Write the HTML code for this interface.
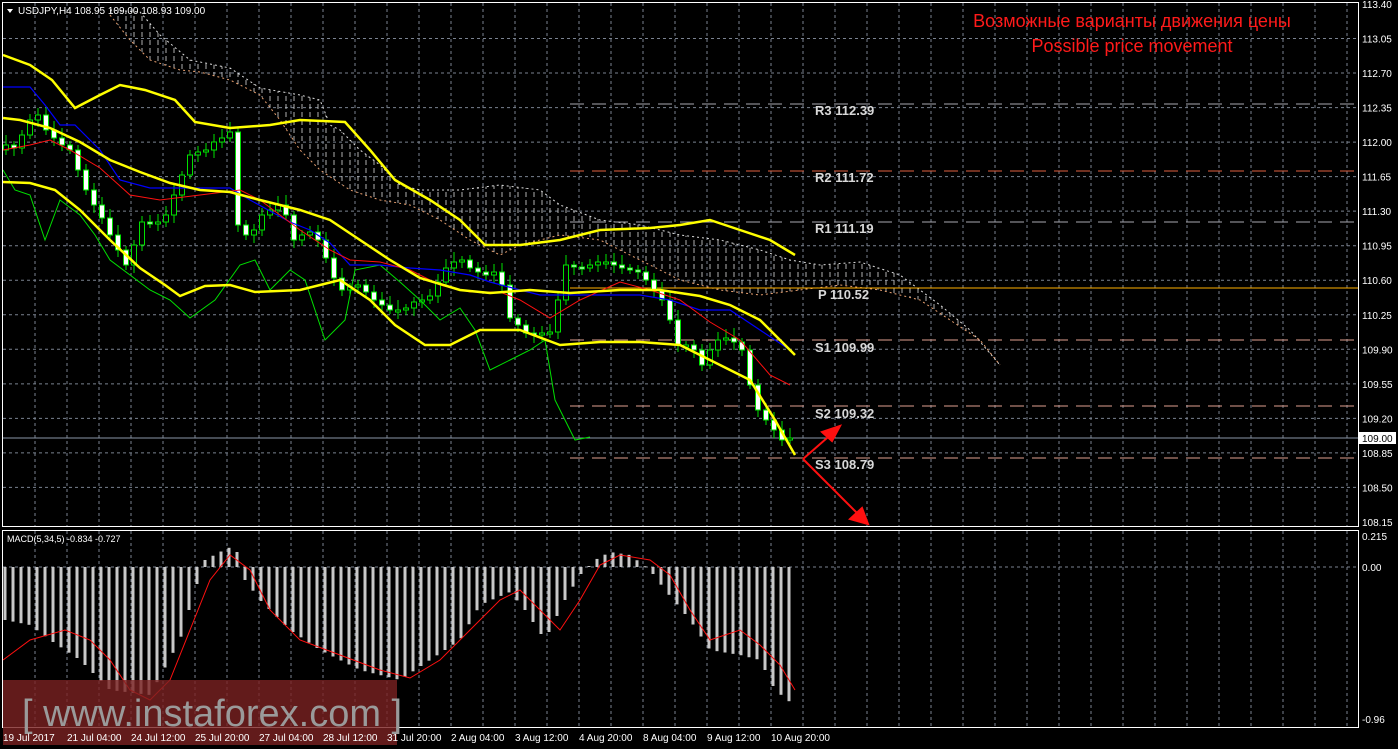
<!DOCTYPE html>
<html><head><meta charset="utf-8"><style>
html,body{margin:0;padding:0;background:#000;width:1398px;height:749px;overflow:hidden}
svg{display:block}
text{font-family:"Liberation Sans",sans-serif}
.ax{fill:#fff;font-size:10px}
.pv{fill:#d8d8d8;font-family:"Liberation Mono",monospace;font-size:13px;font-weight:bold}
</style></head><body>
<svg id="s" width="1398" height="749" xmlns="http://www.w3.org/2000/svg">
<defs>
<pattern id="hatch" x="2" width="8" height="8" patternUnits="userSpaceOnUse">
<line x1="4" y1="0" x2="4" y2="5" stroke="#cfcfcf" stroke-width="1"/>
</pattern>
</defs>
<g id="grid" stroke="#7a8290" stroke-width="1" stroke-dasharray="3,3"></g>
<!-- cloud -->
<polygon fill="url(#hatch)" opacity="0.85" points="110,10 140,12 160,35 190,60 230,68 260,88 300,95 320,100 330,125 340,130 360,150 380,165 400,185 420,190 460,190 500,185 540,190 560,205 600,220 640,225 680,235 720,240 760,250 790,260 820,265 860,262 900,275 940,305 970,330 1000,365 980,340 950,320 920,300 880,290 840,285 800,290 760,295 720,290 680,280 640,260 600,240 560,235 520,245 500,255 470,240 440,220 410,205 380,200 350,190 320,170 300,150 280,120 260,95 230,80 200,72 180,70 150,60 130,40 110,15"/>
<polyline fill="none" stroke="#ddd" stroke-dasharray="2,3" points="110,10 140,12 160,35 190,60 230,68 260,88 300,95 320,100 330,125 340,130 360,150 380,165 400,185 420,190 460,190 500,185 540,190 560,205 600,220 640,225 680,235 720,240 760,250 790,260 820,265 860,262 900,275 940,305 970,330 1000,365"/>
<polyline fill="none" stroke="#e8a070" stroke-dasharray="2,3" points="110,15 130,40 150,60 180,70 200,72 230,80 260,95 280,120 300,150 320,170 350,190 380,200 410,205 440,220 470,240 500,255 520,245 560,235 600,240 640,260 680,280 720,290 760,295 800,290 840,285 880,290 920,300 950,320 980,340 1000,365"/>
<!-- pivots -->
<g stroke-width="1">
<line x1="570" y1="104" x2="1358" y2="104" stroke="#a8a8b0" stroke-dasharray="14,8"/>
<line x1="570" y1="171" x2="1358" y2="171" stroke="#e06040" stroke-dasharray="14,8"/>
<line x1="570" y1="222" x2="1358" y2="222" stroke="#a8a8b0" stroke-dasharray="14,8"/>
<line x1="570" y1="288" x2="1358" y2="288" stroke="#ffb000"/>
<line x1="570" y1="340" x2="1358" y2="340" stroke="#e0a090" stroke-dasharray="14,8"/>
<line x1="570" y1="406" x2="1358" y2="406" stroke="#e0a090" stroke-dasharray="14,8"/>
<line x1="570" y1="458" x2="1358" y2="458" stroke="#e0a090" stroke-dasharray="14,8"/>
<line x1="3" y1="438" x2="1358" y2="438" stroke="#8a96a8"/>
</g>
<g id="candles"></g>
<polyline fill="none" stroke="#00e000" stroke-width="1" points="3,170 15,190 30,195 45,240 60,200 80,215 95,235 110,260 130,275 150,290 170,300 190,318 215,300 240,265 255,260 270,290 290,270 305,280 325,340 345,320 355,270 380,265 400,282 420,300 440,320 460,308 475,330 490,370 510,360 530,350 545,340 555,400 575,440 590,437"/>
<polyline fill="none" stroke="#0000ff" stroke-width="1.2" points="3,87 30,87 45,105 60,125 75,125 100,150 120,180 150,188 230,188 250,200 290,222 310,230 330,243 350,265 380,265 410,268 440,270 470,275 490,282 520,290 540,295 570,295 640,295 670,300 700,310 730,310 760,330 790,350"/>
<polyline fill="none" stroke="#ff1010" stroke-width="1" points="3,150 30,145 50,140 70,150 100,168 130,195 160,200 200,195 240,190 260,200 280,215 300,230 330,250 350,260 380,262 410,270 440,285 470,292 500,292 520,300 550,318 580,300 620,282 650,290 680,300 710,322 740,340 770,375 790,385"/>
<g fill="none" stroke="#ffff00" stroke-width="2.5">
<polyline points="3,55 30,65 52,80 75,108 100,95 120,85 145,90 175,100 195,122 230,128 270,125 300,120 345,122 370,150 395,180 430,200 460,220 485,245 520,245 560,240 600,230 650,228 680,225 710,220 740,230 770,240 795,255"/>
<polyline points="3,118 20,120 50,128 80,142 110,160 140,172 170,183 200,190 230,192 260,200 300,210 330,220 360,240 390,260 420,278 460,290 490,293 530,290 570,293 620,290 660,290 700,296 730,305 760,320 795,355"/>
<polyline points="3,182 30,183 55,190 80,210 110,240 140,268 165,285 180,296 205,286 230,285 255,292 300,290 340,280 370,300 395,325 425,345 450,345 480,330 520,330 560,345 600,342 640,342 680,345 720,365 750,380 775,420 795,455"/>
</g>
<!-- arrows -->
<g stroke="#ff1010" stroke-width="2" fill="#ff1010">
<line x1="803" y1="459" x2="835" y2="431"/>
<polygon points="840,426 822,432 832,441"/>
<line x1="803" y1="459" x2="862" y2="518"/>
<polygon points="868,524 850,519 862,508"/>
</g>
<g class="pv">
<text x="815" y="115">R3 112.39</text>
<text x="815" y="182">R2 111.72</text>
<text x="815" y="233">R1 111.19</text>
<text x="818" y="299">P 110.52</text>
<text x="815" y="352">S1 109.99</text>
<text x="815" y="418">S2 109.32</text>
<text x="815" y="469">S3 108.79</text>
</g>
<text x="1132" y="27" fill="#ff1a1a" font-size="18" text-anchor="middle">Возможные варианты движения цены</text>
<text x="1132" y="52" fill="#ff1a1a" font-size="18" text-anchor="middle">Possible price movement</text>
<text x="18" y="14" fill="#fff" font-size="10">USDJPY,H4  108.95 109.00 108.93 109.00</text>
<polygon points="7,9 13,9 10,13" fill="#fff"/>
<!-- MACD -->
<line x1="3" y1="567" x2="1358" y2="567" stroke="#7a8290" stroke-dasharray="3,3"/>
<g id="hist" fill="#c8c8c8"></g>
<polyline fill="none" stroke="#ff1010" stroke-width="1" points="3,660 30,640 65,630 90,640 110,660 130,690 150,700 170,680 190,630 210,580 230,555 250,570 270,610 300,640 340,655 380,670 410,678 440,660 470,630 500,600 520,590 540,610 560,630 580,600 600,565 620,555 650,560 670,575 690,610 710,640 740,630 760,645 780,665 795,690"/>
<text x="7" y="542" fill="#fff" font-size="9">MACD(5,34,5) -0.834 -0.727</text>
<!-- frames -->
<g fill="none" stroke="#fff" stroke-width="1">
<rect x="2.5" y="2.5" width="1356" height="524"/>
<rect x="2.5" y="530.5" width="1356" height="197"/>
</g>
<g id="axl" class="ax"></g>
<text class="ax" x="1362" y="540">0.215</text>
<text class="ax" x="1362" y="571">0.00</text>
<text class="ax" x="1362" y="723">-0.96</text>
<rect x="1359" y="432" width="37" height="12" fill="#fff"/>
<text x="1362" y="442" font-size="10" fill="#000">109.00</text>
<!-- watermark -->
<rect x="3" y="680" width="394" height="65" fill="#7a2222" opacity="0.8"/>
<text x="22" y="726" fill="#9a9a9a" font-size="38">[ www.instaforex.com ]</text>
<g class="ax">
<text x="3" y="741">19 Jul 2017</text><text x="67" y="741">21 Jul 04:00</text><text x="131" y="741">24 Jul 12:00</text><text x="195" y="741">25 Jul 20:00</text><text x="259" y="741">27 Jul 04:00</text><text x="323" y="741">28 Jul 12:00</text><text x="387" y="741">31 Jul 20:00</text><text x="451" y="741">2 Aug 04:00</text><text x="515" y="741">3 Aug 12:00</text><text x="579" y="741">4 Aug 20:00</text><text x="643" y="741">8 Aug 04:00</text><text x="707" y="741">9 Aug 12:00</text><text x="771" y="741">10 Aug 20:00</text>
</g>
</svg>
<script>
(function(){
var NS="http://www.w3.org/2000/svg";
function el(p,t,a){var e=document.createElementNS(NS,t);for(var k in a)e.setAttribute(k,a[k]);p.appendChild(e);return e;}
var g=document.getElementById('grid');
for(var x=35;x<1358;x+=32){el(g,'line',{x1:x,y1:3,x2:x,y2:526});el(g,'line',{x1:x,y1:531,x2:x,y2:727});}
var ax=document.getElementById('axl');
for(var i=0;i<16;i++){var y=4+i*34.53;if(i>0&&i<15)el(g,'line',{x1:3,y1:y,x2:1358,y2:y});
 if(y>430&&y<446)continue;var t=el(ax,'text',{x:1362,y:y+4});t.textContent=(113.40-i*0.35).toFixed(2);}
function interp(pts,x){for(var j=1;j<pts.length;j++){if(x<=pts[j][0]){var a=pts[j-1],b=pts[j];return a[1]+(b[1]-a[1])*(x-a[0])/(b[0]-a[0]);}}return pts[pts.length-1][1];}
var closes=[145,148,135,120,115,130,138,145,150,170,190,205,218,235,250,265,245,222,224,222,215,195,175,155,152,150,142,138,132,225,235,230,215,210,205,215,240,235,232,240,258,278,290,287,285,292,300,305,310,310,308,302,300,296,282,268,262,260,268,272,275,272,285,318,325,333,335,333,332,300,265,267,268,265,262,262,265,268,270,272,280,290,300,320,345,345,350,365,350,340,338,342,350,385,410,420,430,440,438];
var c=document.getElementById('candles');var prev=150;
for(var n=0;n<closes.length;n++){var xx=6+n*8;var cl=closes[n];var o=prev;prev=cl;var tp=Math.min(o,cl),bt=Math.max(o,cl);if(bt-tp<2){bt=tp+2;}
 el(c,'line',{x1:xx,y1:tp-4-(xx%7),x2:xx,y2:bt+4+(xx%5),stroke:'#00e000'});
 el(c,'rect',{x:xx-2.5,y:tp,width:5,height:bt-tp,fill:(cl>o?'#fff':'#000'),stroke:'#00e000'});}
var hp=[[5,620],[30,625],[50,640],[80,660],[110,690],[150,695],[180,640],[195,590],[205,560],[220,552],[235,545],[245,580],[260,600],[290,630],[320,650],[360,670],[400,680],[430,660],[460,640],[480,605],[510,592],[525,610],[545,640],[565,600],[580,575],[595,560],[610,552],[630,555],[650,570],[665,590],[690,620],[710,650],[740,655],[760,660],[775,690],[795,706]];
var h=document.getElementById('hist');
for(var x2=5;x2<=795;x2+=8){var v=interp(hp,x2);var yy=Math.min(v,567),hh=Math.abs(v-567);el(h,'rect',{x:x2-1.5,y:yy,width:3,height:Math.max(hh,1)});}
})();
</script>
</body></html>
